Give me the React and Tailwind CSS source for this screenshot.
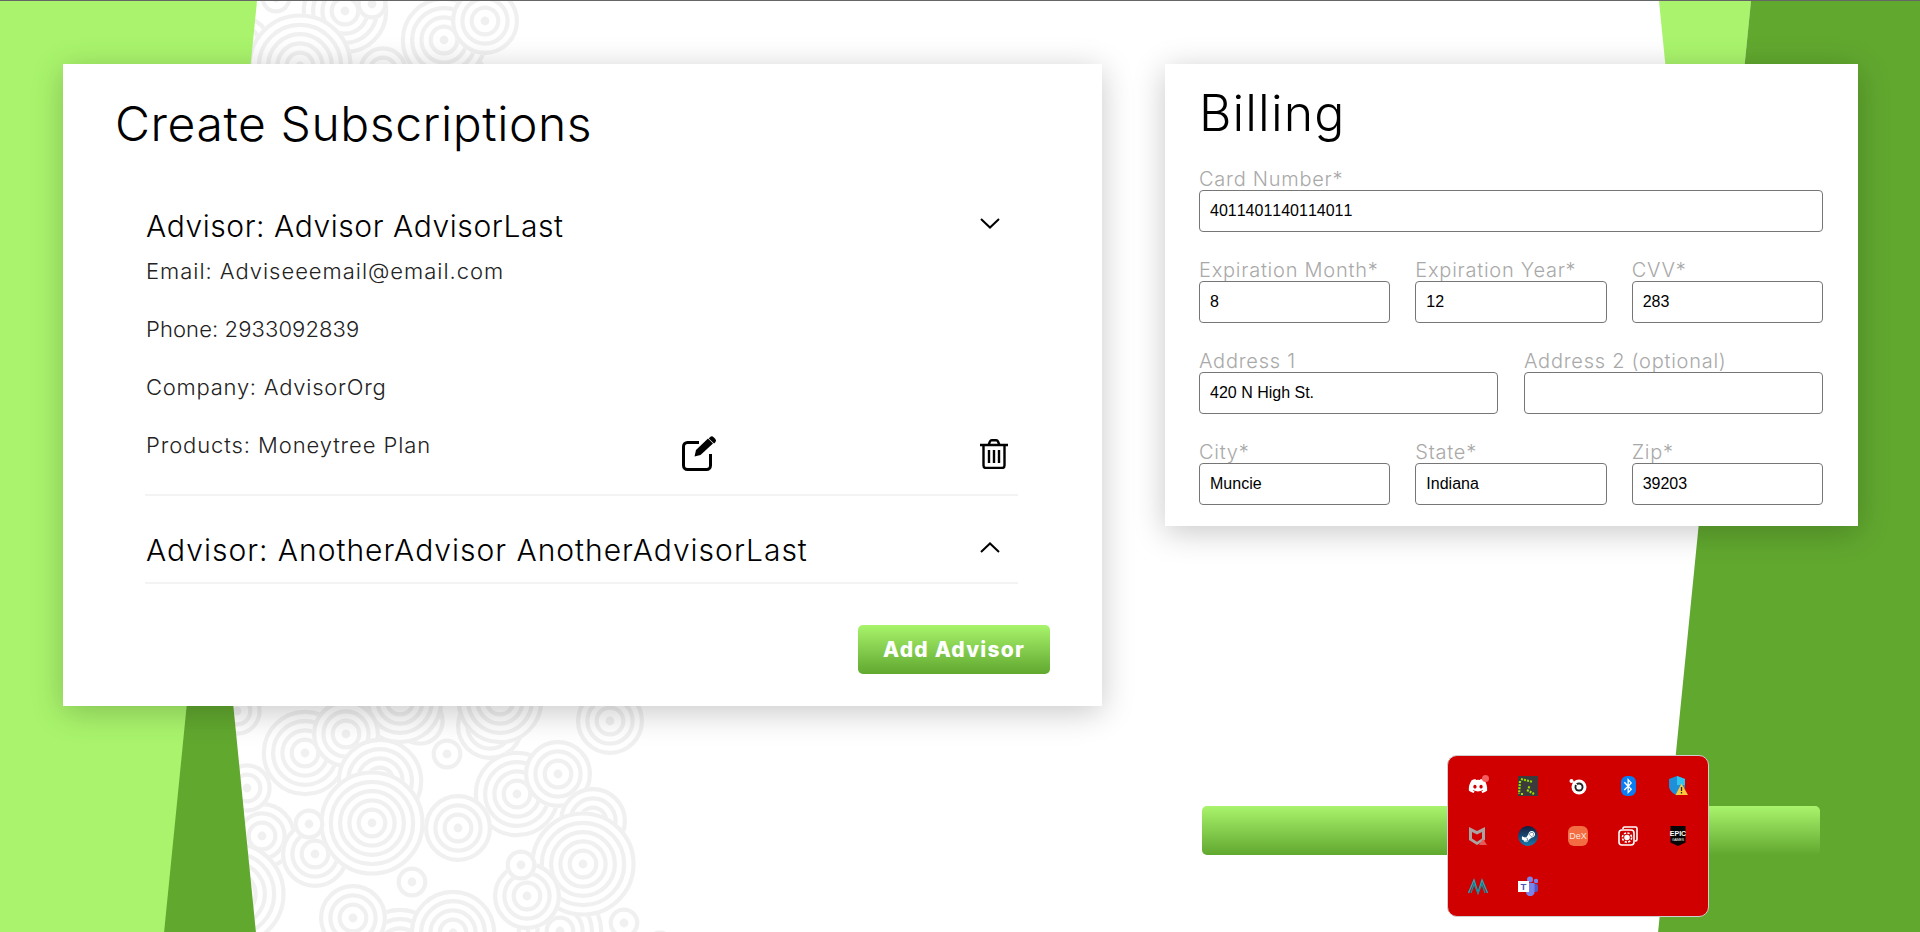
import React from 'react';
import { FaDiscord, FaBluetoothB, FaSteamSymbol } from 'react-icons/fa';

const CIRCLES = [
    [345, 10, 50], [245, 40, 30], [276, -3, 23], [372, 3, 23], [383, 70, 30], [470, 70, 20],
    [300, 65, 52], [444, 39, 50], [485, 20, 33],
    [262, 835, 40], [400, 950, 50], [560, 930, 50], [490, 725, 40], [420, 720, 32],
    [233, 893, 60], [247, 787, 30], [237, 710, 24], [500, 700, 50], [400, 700, 44],
    [305, 752, 50], [346, 733, 33], [380, 780, 44], [610, 720, 42], [447, 753, 23],
    [517, 793, 50], [558, 773, 33], [593, 820, 42], [315, 853, 42], [372, 822, 52],
    [309, 823, 23], [458, 827, 40], [583, 863, 52], [527, 895, 42], [521, 864, 23],
    [412, 881, 23], [353, 917, 42], [453, 932, 48], [624, 922, 23], [660, 945, 22],
];

function Swirl({ cx, cy, r }) {
    const rings = [];
    for (let ring = 13.3; ring + 2 <= r + 1; ring += 9.3) rings.push(ring);
    const outer = rings[rings.length - 1] + 2.1;
    return (
        <g>
            <circle cx={cx} cy={cy} r={outer} fill="#fff" />
            <circle cx={cx} cy={cy} r={4.4} fill="#f0f0f0" />
            {rings.map((ring) => (
                <circle key={ring} cx={cx} cy={cy} r={ring} fill="none" stroke="#f0f0f0" strokeWidth={4.2} />
            ))}
        </g>
    );
}

function Backdrop() {
    return (
        <svg className="absolute inset-0 h-[932px] w-[1920px]" viewBox="0 0 1920 932">
            {CIRCLES.map(([cx, cy, r]) => (
                <Swirl key={`${cx}-${cy}`} cx={cx} cy={cy} r={r} />
            ))}
            <polygon points="163,0 256,932 100,932" fill="#61a82f" />
            <polygon points="0,0 257,0 164,932 0,932" fill="#a9f46c" />
            <polygon points="1659,0 1751,0 1705,460" fill="#a9f46c" />
            <polygon points="1751,0 1920,0 1920,932 1658,932" fill="#61a82f" />
        </svg>
    );
}

function Chevron({ up }) {
    return (
        <svg className="h-[11px] w-[20px]" viewBox="0 0 20 11" fill="none" stroke="#000" strokeWidth={2}>
            <path d={up ? 'M1 10l9-8.5 9 8.5' : 'M1 1l9 8.5 9-8.5'} />
        </svg>
    );
}

function EditIcon() {
    return (
        <svg className="mt-[4px] h-[36px] w-[36px] shrink-0" viewBox="0 0 36 36">
            <path d="M17 7.5H5.5a4 4 0 0 0-4 4v19a4 4 0 0 0 4 4h19a4 4 0 0 0 4-4V19" fill="none" stroke="#000" strokeWidth={3} />
            <path d="M12.5 21.5l1.5-6.5L26 3.5l5 5L18.5 20z" fill="#000" />
            <path d="M28 2.2a2.6 2.6 0 0 1 3.6 0l1.6 1.6a2.6 2.6 0 0 1 0 3.6L32 8.6 26.8 3.4z" fill="#000" />
        </svg>
    );
}

function TrashIcon() {
    return (
        <svg className="ml-[262px] mt-[8px] h-[30px] w-[28px] shrink-0" viewBox="0 0 28 30" fill="none" stroke="#000" strokeWidth={2.4}>
            <path d="M0 6h28M8.5 6l1.5-3.6a2 2 0 0 1 1.8-1.2h4.4a2 2 0 0 1 1.8 1.2L19.5 6" />
            <path d="M3.5 6v20.5a2.5 2.5 0 0 0 2.5 2.5h16a2.5 2.5 0 0 0 2.5-2.5V6" />
            <path d="M9 11v13M14 11v13M19 11v13" />
        </svg>
    );
}

function Field({ label, value, className = '' }) {
    return (
        <label className={`block ${className}`}>
            <span className="block h-[20px] text-[20px] leading-[18px] font-light tracking-[0.75px] text-[#a9a9a9]">{label}</span>
            <input
                defaultValue={value}
                className="block h-[42px] w-full rounded-[4px] border border-[#767676] bg-white px-[10px] text-[16px] text-black [font-family:'Liberation_Sans',Arial,sans-serif] [font-kerning:none]"
            />
        </label>
    );
}

function TrayIcons() {
    return (
        <div className="absolute left-[1447px] top-[754px] grid h-[162px] w-[262px] grid-cols-[repeat(5,50px)] grid-rows-[repeat(3,50px)] place-items-center rounded-[10px] border border-[#cfcfcf] bg-[#d00000] pl-[5px] pt-[5px]">
            <div className="relative flex h-5 w-5 items-center justify-center">
                <FaDiscord className="h-[20px] w-[20px] text-white" />
                <span className="absolute right-[-1px] top-[-1px] h-[7px] w-[7px] rounded-full bg-[#f35d5d]" />
            </div>
            <svg className="h-5 w-5" viewBox="0 0 20 20">
                <rect width="20" height="20" fill="#3b3b3b" />
                <path d="M3 3l12 3M2 5L1 18M3 18h3M9 14l7 4M10 11l3 1" fill="none" stroke="#9be000" strokeWidth={2.2} strokeDasharray="2 1.1" />
            </svg>
            <svg className="h-5 w-5" viewBox="0 0 20 20">
                <circle cx="11" cy="11" r="7.5" fill="#fff" />
                <circle cx="11" cy="11" r="4.5" fill="#222" />
                <circle cx="11" cy="11" r="2.6" fill="#fff" />
                <circle cx="3.5" cy="5" r="2" fill="#fff" />
                <path d="M4 5l5 4" stroke="#fff" strokeWidth={1.5} />
            </svg>
            <div className="flex h-5 w-[15px] items-center justify-center rounded-[6px] bg-[#0a7df2]">
                <FaBluetoothB className="h-[16px] w-[12px] text-white" />
            </div>
            <svg className="h-5 w-5" viewBox="0 0 20 20">
                <path d="M1 3l8-3 8 3v7c0 4-3 7-8 9.5C4 17 1 14 1 10z" fill="#1f8fd8" />
                <path d="M9 0l8 3v6H9z" fill="#33c3f0" />
                <path d="M13.5 7.5L20 19H7.5z" fill="#ffc83d" />
                <path d="M13.5 11v4M13.5 16v1.5" stroke="#222" strokeWidth={1.3} />
            </svg>
            <svg className="h-5 w-5" viewBox="0 0 20 20">
                <path d="M1 1l8 4 8-4v13l-8 5-8-5zM4 6v6.5l5 3.3 5-3.3V6l-5 2.5z" fill="#a9a3a3" fillRule="evenodd" />
                <path d="M15 13l4 6h-8z" fill="#e65a5a" />
            </svg>
            <div className="flex h-5 w-5 items-center justify-center rounded-full bg-gradient-to-b from-[#111d3d] to-[#1279ad]">
                <FaSteamSymbol className="h-[15px] w-[15px] text-white" />
            </div>
            <div className="flex h-5 w-5 items-center justify-center rounded-[6px] bg-[#f36c42] text-[9px] leading-none text-[#ffe6dc] [font-family:'Liberation_Sans',sans-serif]">
                DeX
            </div>
            <svg className="h-5 w-5" viewBox="0 0 20 20" fill="none" stroke="#fff" strokeWidth={1.6}>
                <path d="M5 3V2.5A1.5 1.5 0 0 1 6.5 1h11A1.5 1.5 0 0 1 19 2.5v11a1.5 1.5 0 0 1-1.5 1.5H17" />
                <rect x="1" y="4" width="15" height="15" rx="3" />
                <circle cx="9" cy="11.5" r="2" fill="#fff" />
                <circle cx="9" cy="11.5" r="4.6" strokeDasharray="2.2 1.4" />
            </svg>
            <svg className="h-5 w-5" viewBox="0 0 20 20">
                <path d="M2.5 0h15v16.5L10 20l-7.5-3.5z" fill="#050505" />
                <text x="10" y="10" textAnchor="middle" fontSize="7" fontWeight="700" fill="#fff" fontFamily="Liberation Sans">EPIC</text>
                <text x="10" y="15" textAnchor="middle" fontSize="3.4" fill="#fff" fontFamily="Liberation Sans">GAMES</text>
            </svg>
            <svg className="h-5 w-5" viewBox="0 0 20 20" fill="none" strokeWidth={1.3}>
                <path d="M0.5 17L6 4l4 13 4-13 5.5 13" stroke="#12b3c6" />
                <path d="M3 17L6 8l4 9 4-9 3 9" stroke="#0d8fa2" />
            </svg>
            <svg className="h-5 w-5" viewBox="0 0 20 20">
                <circle cx="18" cy="5" r="2.2" fill="#7b83eb" />
                <rect x="14" y="8" width="6" height="8" rx="2" fill="#5059c9" />
                <circle cx="12" cy="3.5" r="3" fill="#7b83eb" />
                <path d="M8 7h8.5v9a4 4 0 0 1-8.5 0z" fill="#7b83eb" />
                <rect x="0" y="5" width="11" height="11" fill="#fff" />
                <text x="5.5" y="14" textAnchor="middle" fontSize="9.5" fontWeight="700" fill="#4b53bc" fontFamily="Liberation Sans">T</text>
            </svg>
        </div>
    );
}

export default function App() {
    return (
        <div className="relative h-[932px] w-[1920px] overflow-hidden border-t border-[#666666] bg-white text-black [font-family:Inter,'Noto_Sans',sans-serif]">
            <Backdrop />

            <div className="relative flex gap-[63px] pl-[63px] pt-[63px]">
                <section className="flex h-[642px] w-[1039px] flex-col bg-white px-[52px] pt-[32px] shadow-[0_6px_30px_rgba(0,0,0,0.22)]">
                    <h1 className="text-[48px] leading-[56px] font-light tracking-[0.6px]">Create Subscriptions</h1>

                    <div className="ml-[30px] mt-[56px] w-[873px]">
                        <div className="border-b-2 border-[#f3f3f3] pb-[23px] pl-[1px] pr-[18px]">
                            <div className="flex h-[36px] items-center justify-between">
                                <h2 className="text-[30px] font-light tracking-[0.58px]">Advisor: Advisor AdvisorLast</h2>
                                <span className="mb-[6px]"><Chevron /></span>
                            </div>
                            <div className="mt-[13px] flex flex-col gap-[30px] text-[22px] leading-[28px] font-light text-[#222222]">
                                <p className="tracking-[0.97px]">Email: Adviseeemail@email.com</p>
                                <p className="tracking-[0.1px]">Phone: 2933092839</p>
                                <p className="tracking-[0.75px]">Company: AdvisorOrg</p>
                                <div className="mr-[-18px] flex items-start">
                                    <p className="w-[536px] shrink-0 tracking-[0.9px]">Products: Moneytree Plan</p>
                                    <EditIcon />
                                    <TrashIcon />
                                </div>
                            </div>
                        </div>
                        <div className="border-b-2 border-[#f3f3f3] pb-[14px] pl-[1px] pr-[18px] pt-[36px]">
                            <div className="flex h-[36px] items-center justify-between">
                                <h2 className="text-[30px] font-light tracking-[1px]">Advisor: AnotherAdvisor AnotherAdvisorLast</h2>
                                <span className="mb-[6px]"><Chevron up /></span>
                            </div>
                        </div>
                    </div>

                    <button className="mt-[41px] h-[49px] w-[192px] self-end rounded-[5px] bg-gradient-to-b from-[#a9f46c] to-[#61a82f] text-[21px] font-extrabold tracking-[1.2px] text-white">
                        Add Advisor
                    </button>
                </section>

                <div className="flex w-[693px] flex-col">
                    <section className="h-[462px] bg-white px-[34px] pt-[21px] shadow-[0_6px_30px_rgba(0,0,0,0.22)]">
                        <h1 className="text-[50px] leading-[56px] font-light tracking-[1.1px]">Billing</h1>
                        <form className="mt-[29px] flex w-[624px] flex-col gap-[29px]">
                            <Field label="Card Number*" value="4011401140114011" />
                            <div className="grid grid-cols-3 gap-x-[25px]">
                                <Field label="Expiration Month*" value="8" />
                                <Field label="Expiration Year*" value="12" />
                                <Field label="CVV*" value="283" />
                            </div>
                            <div className="grid grid-cols-2 gap-x-[26px]">
                                <Field label="Address 1" value="420 N High St." />
                                <Field label="Address 2 (optional)" value="" />
                            </div>
                            <div className="grid grid-cols-3 gap-x-[25px]">
                                <Field label="City*" value="Muncie" />
                                <Field label="State*" value="Indiana" />
                                <Field label="Zip*" value="39203" />
                            </div>
                        </form>
                    </section>
                    <button className="ml-[37px] mt-[280px] h-[49px] w-[618px] rounded-[5px] bg-gradient-to-b from-[#a9f46c] to-[#61a82f]" />
                </div>
            </div>

            <TrayIcons />
        </div>
    );
}
